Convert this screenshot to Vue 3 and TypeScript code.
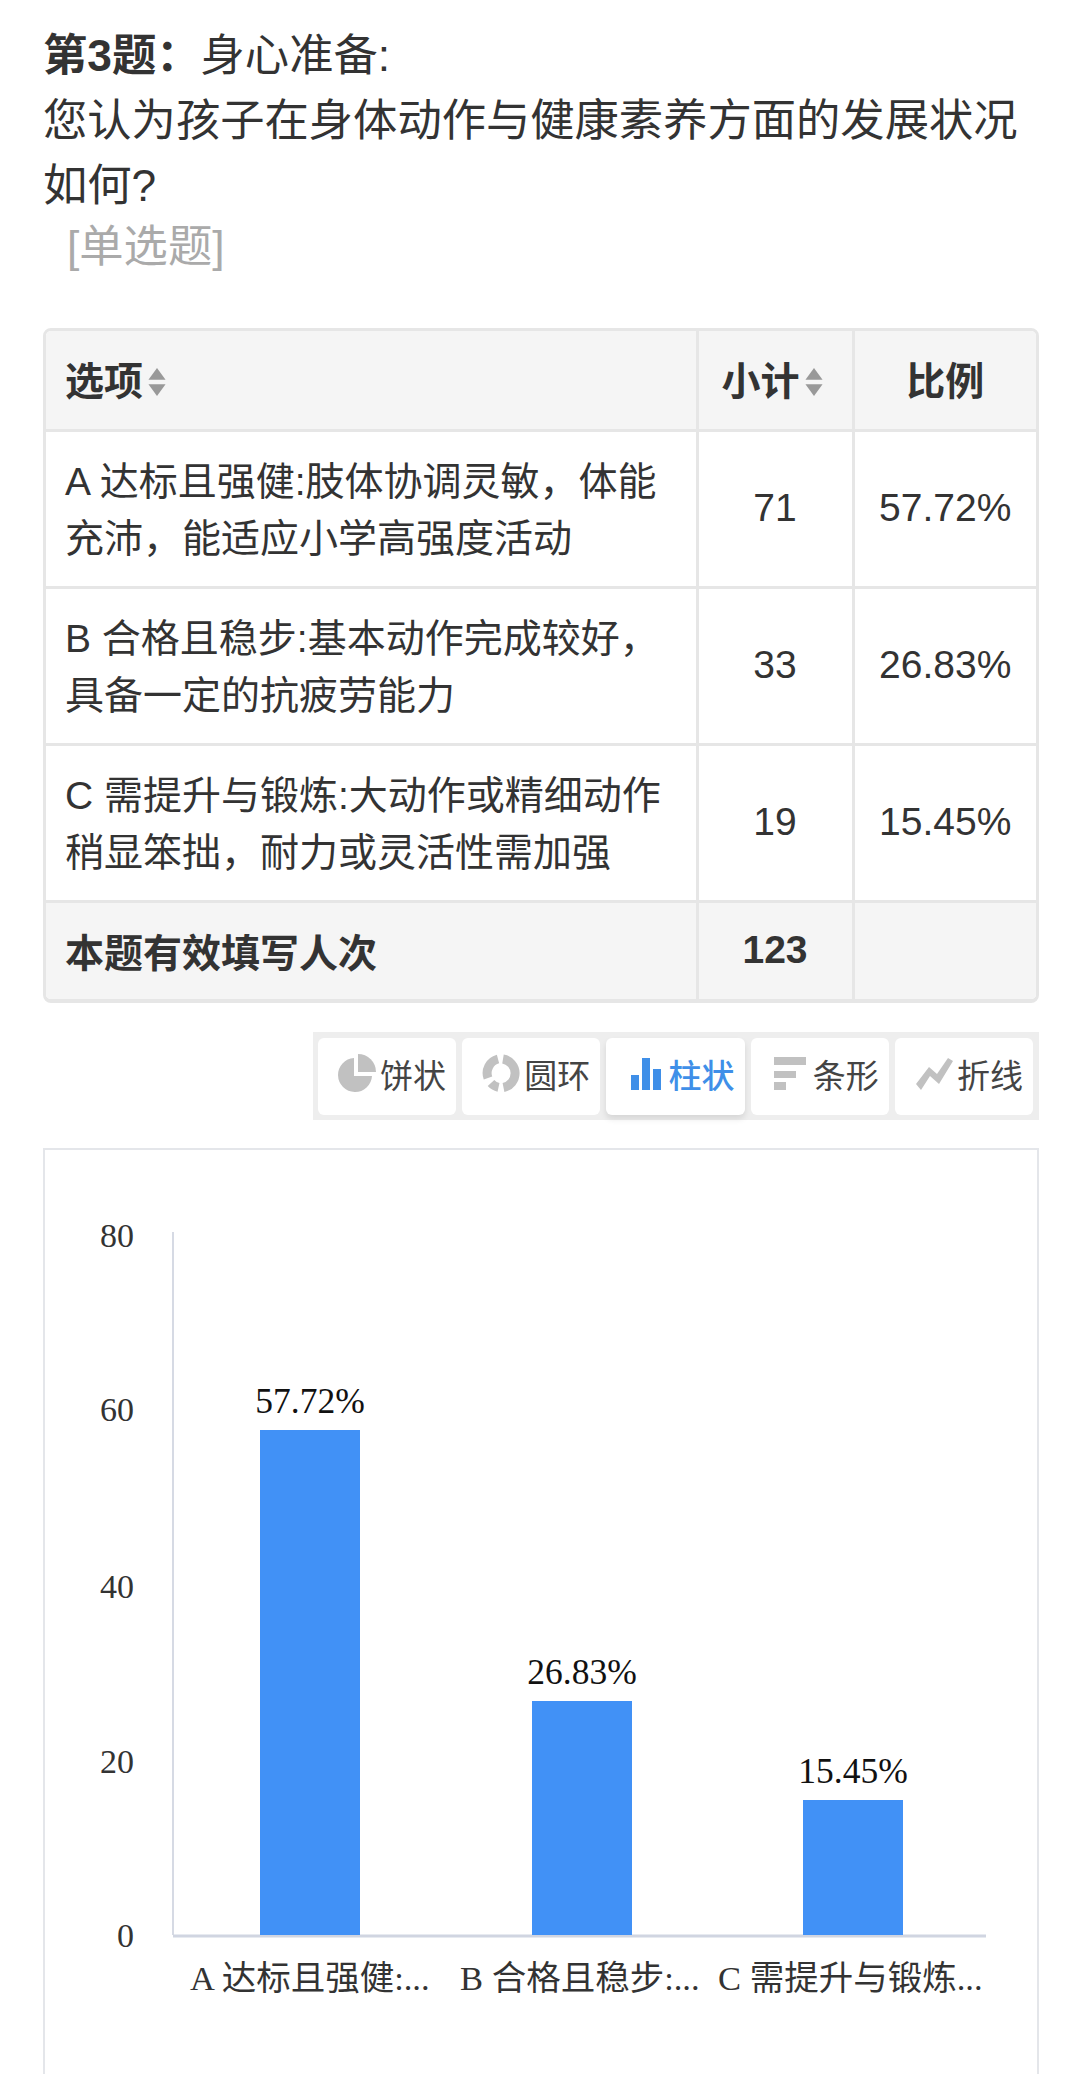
<script setup lang="ts">
interface Row { label: string[]; count: number; pct: string }
const rows: Row[] = [
  { label: ['A 达标且强健:肢体协调灵敏，体能', '充沛，能适应小学高强度活动'], count: 71, pct: '57.72%' },
  { label: ['B 合格且稳步:基本动作完成较好，', '具备一定的抗疲劳能力'], count: 33, pct: '26.83%' },
  { label: ['C 需提升与锻炼:大动作或精细动作', '稍显笨拙，耐力或灵活性需加强'], count: 19, pct: '15.45%' },
]
const ticks = [
  { t: '80', y: 88 }, { t: '60', y: 262 }, { t: '40', y: 439 }, { t: '20', y: 614 }, { t: '0', y: 788 },
]
const bars = [
  { x: 217, top: 282, label: '57.72%', cat: 'A 达标且强健:...', catX: 147 },
  { x: 489, top: 553, label: '26.83%', cat: 'B 合格且稳步:...', catX: 417 },
  { x: 760, top: 652, label: '15.45%', cat: 'C 需提升与锻炼...', catX: 675 },
]
const baseY = 787
</script>

<template>
  <div class="page">
    <h2 class="title">
      <div><b>第3题：</b>身心准备:</div>
      <div>您认为孩子在身体动作与健康素养方面的发展状况</div>
      <div>如何?</div>
      <div class="kind">[单选题]</div>
    </h2>

    <div class="table-wrap">
      <table>
        <colgroup><col class="c1" /><col class="c2" /><col class="c3" /></colgroup>
        <thead>
          <tr>
            <th class="left">选项<svg class="sort" viewBox="0 0 18 28"><path d="M9 1 17 12H1Z" /><path d="M1 16H17L9 27Z" /></svg></th>
            <th class="sum">小计<svg class="sort" viewBox="0 0 18 28"><path d="M9 1 17 12H1Z" /><path d="M1 16H17L9 27Z" /></svg></th>
            <th>比例</th>
          </tr>
        </thead>
        <tbody>
          <tr v-for="r in rows" :key="r.count">
            <td class="left opt"><div v-for="l in r.label" :key="l">{{ l }}</div></td>
            <td class="num">{{ r.count }}</td>
            <td class="num">{{ r.pct }}</td>
          </tr>
        </tbody>
        <tfoot>
          <tr>
            <td class="left"><b>本题有效填写人次</b></td>
            <td class="num"><b>123</b></td>
            <td></td>
          </tr>
        </tfoot>
      </table>
    </div>

    <div class="tools">
      <div class="tool">
        <svg class="ic" viewBox="0 0 38 38"><path d="M16 4A17 17 0 1 0 34 22H16Z" /><path d="M20 0A18 18 0 0 1 38 18H20Z" /></svg>
        <span>饼状</span>
      </div>
      <div class="tool">
        <svg class="ic" viewBox="0 0 38 38">
          <g fill="none" stroke="#c1c1c1" stroke-width="9">
            <path d="M21 5A14.5 14.5 0 0 1 21.500 33.500" />
            <path d="M16.500 33.300A14.500 14.500 0 0 1 9 29" />
            <path d="M6 24A14.500 14.500 0 0 1 16 5" />
          </g>
        </svg>
        <span>圆环</span>
      </div>
      <div class="tool active">
        <svg class="ic bar" viewBox="0 0 38 38"><path d="M4 21H12V36H4ZM15 4H23V36H15ZM26 15H34V36H26Z" /></svg>
        <span>柱状</span>
      </div>
      <div class="tool">
        <svg class="ic" viewBox="0 0 38 38"><path d="M3 3H35V11H3ZM3 17H25V24H3ZM3 28H15V36H3Z" /></svg>
        <span>条形</span>
      </div>
      <div class="tool">
        <svg class="ic" viewBox="0 0 38 38"><path d="M1 30 14 13 22 20 33 4 38 7 24 30 15 22 6 36Z" /></svg>
        <span>折线</span>
      </div>
    </div>

    <div class="chart">
      <svg class="plot" viewBox="0 0 995 960" width="995" height="960">
        <line x1="130" y1="84" x2="130" :y2="baseY" stroke="#d6dae4" stroke-width="2" />
        <line x1="130" :y1="baseY + 1" x2="943" :y2="baseY + 1" stroke="#d0d5e1" stroke-width="3" />
        <text v-for="t in ticks" :key="t.t" x="91" :y="t.y + 11" text-anchor="end" class="tick">{{ t.t }}</text>
        <g v-for="b in bars" :key="b.label">
          <rect :x="b.x" :y="b.top" width="100" :height="baseY - b.top" fill="#4191f6" />
          <text :x="b.x + 50" :y="b.top - 17" text-anchor="middle" class="val">{{ b.label }}</text>
          <text :x="b.catX" y="842" class="cat">{{ b.cat }}</text>
        </g>
      </svg>
    </div>
  </div>
</template>

<style>
html, body { margin: 0; background: #fff; }
</style>

<style scoped>
.page {
  width: 1080px;
  height: 2074px;
  overflow: hidden;
  box-sizing: border-box;
  padding: 23px 41px 0 43px;
  background: #fff;
  color: #333;
  font-family: "Liberation Sans", "Noto Sans CJK SC", sans-serif;
}
.title {
  margin: 0;
  font-size: 44.3px;
  font-weight: 400;
  line-height: 65px;
  color: #333;
}
.kind {
  margin-left: 24px;
  color: #aaa;
  line-height: 58px;
}
.table-wrap {
  margin-top: 52px;
  border: 3px solid #e6e6e6;
  border-bottom-width: 4px;
  border-radius: 8px;
  overflow: hidden;
}
table {
  width: 100%;
  table-layout: fixed;
  border-collapse: collapse;
  font-size: 39px;
}
.c1 { width: 651px; }
.c2 { width: 156px; }
th, td {
  box-sizing: border-box;
  border: 3px solid #e6e6e6;
  text-align: center;
  padding: 0;
  color: #333;
}
tr > :first-child { border-left: 0; }
tr > :last-child { border-right: 0; }
thead th { border-top: 0; }
tfoot td { border-bottom: 0; }
th { height: 99px; background: #f5f5f5; font-weight: 700; padding-bottom: 3px; }
tbody td { height: 157px; line-height: 57px; }
tbody td.opt { padding-top: 2px; }
tbody td.num { padding-bottom: 2px; }
tfoot td { height: 98px; background: #f5f5f5; padding-bottom: 2px; }
.left { text-align: left; padding-left: 19px; }
.sum { padding-right: 5px; }
.sort {
  width: 20px;
  height: 30px;
  margin-left: 4px;
  vertical-align: -2px;
  fill: #999;
}
.tools {
  margin: 29px 0 0 auto;
  width: 726px;
  height: 88px;
  box-sizing: border-box;
  padding: 6px 6px 5px 5px;
  display: flex;
  gap: 6px;
  background: #eee;
}
.tool {
  flex: 1;
  display: flex;
  align-items: center;
  justify-content: center;
  gap: 4px;
  box-sizing: border-box;
  padding: 0 0 5px 10px;
  background: #fff;
  border-radius: 6px;
  font-size: 33px;
  color: #444;
}
.tool.active {
  color: #3f8fe8;
  font-weight: 500;
  box-shadow: 0 4px 6px rgba(0, 0, 0, 0.1);
}
.ic {
  width: 38px;
  height: 38px;
  margin-top: -2px;
  fill: #c1c1c1;
  flex: none;
}
.ic.bar { fill: #3f8fe8; }
.chart {
  margin-top: 28px;
  height: 960px;
  box-sizing: border-box;
  border: 2px solid #e4e6ea;
  border-bottom: 0;
}
.plot { display: block; margin: -2px 0 0 -2px; }
.tick {
  font-family: "Liberation Serif", serif;
  font-size: 34px;
  fill: #333;
}
.val {
  font-family: "Liberation Serif", serif;
  font-size: 35.500px;
  fill: #111;
}
.cat {
  font-family: "Liberation Serif", "Noto Sans CJK SC", serif;
  font-size: 34.500px;
  fill: #333;
}
</style>
